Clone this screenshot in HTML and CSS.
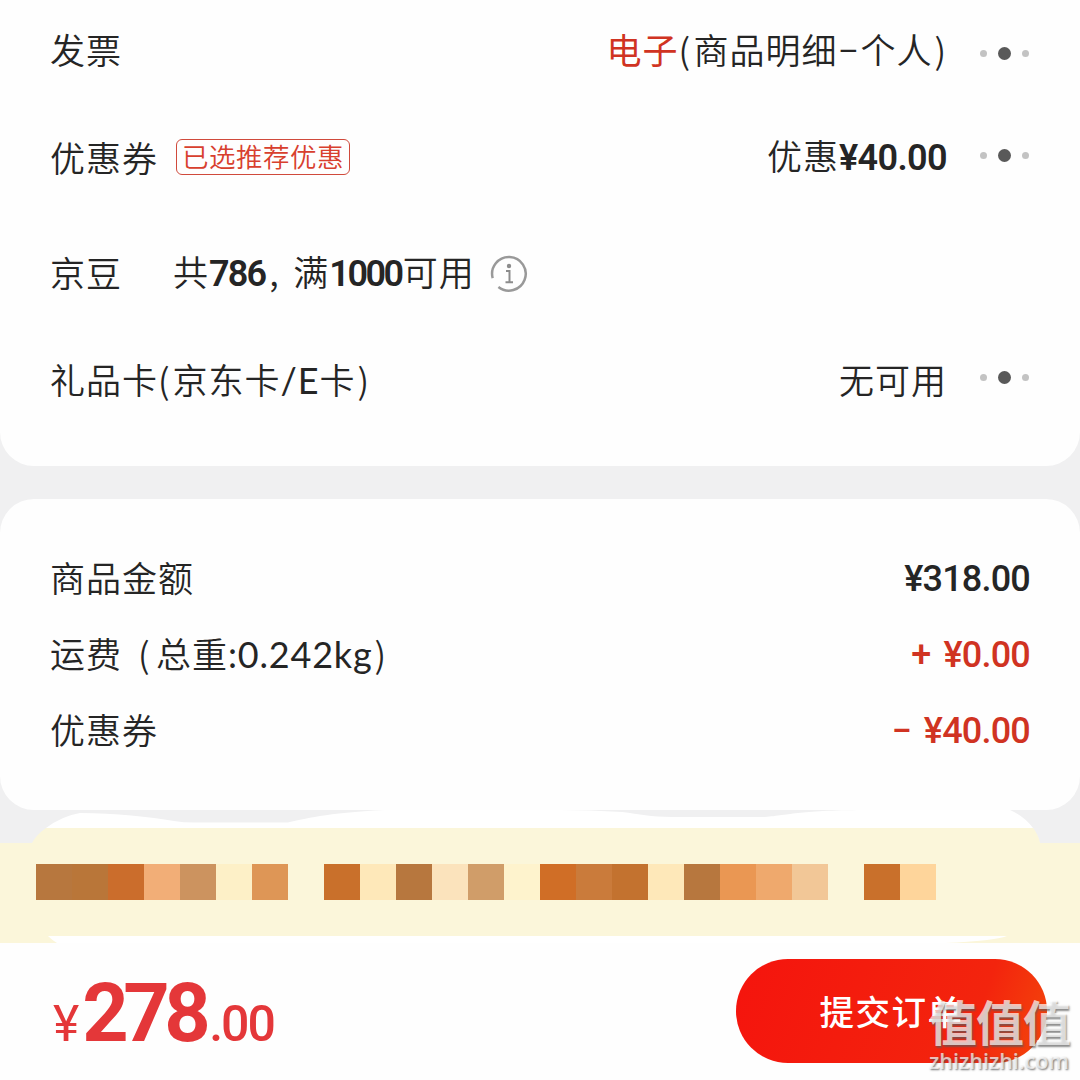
FILE: index.html
```html
<!DOCTYPE html>
<html lang="zh-CN">
<head>
<meta charset="utf-8">
<title>确认订单</title>
<link rel="stylesheet" href="styles.css">
</head>
<body>
<main class="page">
  <section class="card options">
    <div class="row invoice">
      <span class="label">发票</span>
      <span class="value"><span class="red electronic">电子</span><span class="paren open">(</span>商品明细<span class="dash">–</span>个人<span class="paren close">)</span></span>
      <span class="dots"><i></i><i></i><i></i></span>
    </div>
    <div class="row coupon">
      <span class="label">优惠券</span>
      <span class="tag">已选推荐优惠</span>
      <span class="value">优惠<b class="num">¥40.00</b></span>
      <span class="dots"><i></i><i></i><i></i></span>
    </div>
    <div class="row beans">
      <span class="label">京豆</span>
      <span class="detail">共<b class="num">786</b><span class="comma">,</span>满<b class="num limit">1000</b>可用</span>
      <svg class="info" width="38" height="38" viewBox="0 0 38 38">
        <path d="M2.7 23.2A16.8 16.8 0 1 1 8.4 31.9" fill="none" stroke="#999" stroke-width="2.5"/>
        <circle cx="19" cy="11" r="2.2" fill="#8c8c8c"/>
        <path d="M16 16h3.500v11.5M15.500 27.300h7.500" fill="none" stroke="#8c8c8c" stroke-width="2"/>
      </svg>
    </div>
    <div class="row gift">
      <span class="label">礼品卡<span class="paren">(</span>京东卡<span class="latin">/E</span>卡<span class="paren close">)</span></span>
      <span class="value">无可用</span>
      <span class="dots"><i></i><i></i><i></i></span>
    </div>
  </section>

  <section class="card totals">
    <div class="row"><span class="label">商品金额</span><b class="amount">¥318.00</b></div>
    <div class="row"><span class="label">运费<span class="paren wide-open">(</span>总重<span class="latin weight">:0.242kg</span><span class="paren close">)</span></span><b class="amount red"><span class="sign">+</span>¥0.00</b></div>
    <div class="row"><span class="label">优惠券</span><b class="amount red"><span class="sign">−</span>¥40.00</b></div>
  </section>

  <section class="notice">
    <svg class="notice-bg" width="1080" height="133" viewBox="0 0 1080 133">
      <path d="M0 33H1080V133H0Z" fill="#fbf6da"/>
      <path d="M32 33Q36 25 46 18H1033Q1038 24 1040 33Z" fill="#fbf6da"/>
      <path d="M46 18Q62 6 80 3C115 3 150 7 174 11Q186 13 200 12.500H288C304 9 325 3 385 0H559Q590 0 622 2C640 4 650 7 672 7H765C790 5 800 0 870 0H1010Q1024 6 1033 18Z" fill="#fff"/>
      <path d="M48 126H1007Q994 131 945 133H57Q52 130 48 126Z" fill="#fff"/>
    </svg>
    <div class="mosaic">
      <i class="c1"></i><i class="c2"></i><i class="c3"></i><i class="c4"></i><i class="c5"></i><i class="c6"></i><i class="c7"></i><i></i><i class="c8"></i><i class="c9"></i><i class="c10"></i><i class="c11"></i><i class="c12"></i><i class="c13"></i><i class="c14"></i><i class="c15"></i><i class="c16"></i><i class="c9"></i><i class="c10"></i><i class="c17"></i><i class="c18"></i><i class="c19"></i><i></i><i class="c8"></i><i class="c20"></i>
    </div>
  </section>

  <footer class="footer">
    <div class="price"><span class="yen">¥</span><span class="whole">278</span><span class="cents">.00</span></div>
    <button class="submit">提交订单</button>
    <div class="watermark"><span class="mark">值值值</span><span class="site">zhizhizhi.com</span></div>
  </footer>
</main>
</body>
</html>
```
FILE: styles.css
```css
* { box-sizing: border-box; }
body { margin: 0; }
.page {
  width: 1080px;
  height: 1080px;
  overflow: hidden;
  display: flex;
  flex-direction: column;
  background: #f0f0f1;
  color: #252525;
  font-family: "Noto Sans CJK SC", sans-serif;
  font-size: 35px;
  font-weight: 350;
  letter-spacing: 1px;
  white-space: nowrap;
}
.card { background: #fefefe; }
.options { height: 466px; border-radius: 0 0 34px 34px; }
.totals { height: 311px; margin-top: 33px; padding-top: 41px; border-radius: 34px; }
.row { display: flex; align-items: center; padding: 0 50px; line-height: 50px; }
.label, .value, .detail { margin-top: -4px; }
.invoice { height: 106px; }
.invoice .label, .invoice .value { margin-top: -8px; }
.coupon { height: 104px; }
.coupon .label, .coupon .value { margin-top: -3px; }
.coupon .dots { margin-top: -6px; }
.coupon .tag { margin-top: -2px; }
.beans { height: 128px; }
.gift { height: 86px; }
.gift .label, .gift .value { margin-top: -4px; }
.gift .dots { margin-top: -8px; }
.totals .row { height: 76px; }
.totals .label { margin-top: -2px; }
.red { color: #d03322; }
.value { margin-left: auto; }
.electronic { font-weight: 400; }
.paren { display: inline-block; width: 14.5px; }
.open { width: 15px; }
.close { padding-left: 2px; }
.wide-open { width: 18px; margin-left: 16px; }
.dash { display: inline-block; width: 23px; text-align: center; transform: translateY(-4px) scaleY(1.15); }
.num { font-family: Roboto, sans-serif; font-size: 36px; font-weight: 600; letter-spacing: -0.6px; }
.beans .num { letter-spacing: -1.8px; }
.beans .limit { margin-right: 1px; letter-spacing: -2.5px; }
.tag {
  width: 174px;
  height: 36px;
  margin-left: 18px;
  border: 1.5px solid #d04a3c;
  border-radius: 6px;
  color: #d8402e;
  font-size: 26.500px;
  line-height: 32px;
  letter-spacing: 0.5px;
  text-align: center;
}
.detail { margin-left: 51px; }
.comma { display: inline-block; width: 28px; padding-left: 4px; }
.info { margin-left: 15px; }
.latin { font-family: Lato, sans-serif; font-size: 36px; font-weight: 400; }
.weight { letter-spacing: 0.8px; }
.dots { display: flex; align-items: center; gap: 11px; width: 50px; margin-left: 33px; }
.dots i { width: 7px; height: 7px; border-radius: 50%; background: #c3c3c3; }
.dots i:nth-child(2) { width: 13px; height: 13px; background: #595959; }
.amount { margin-left: auto; margin-top: 1px; font-family: Roboto, sans-serif; font-size: 36px; font-weight: 550; letter-spacing: -0.8px; }
.sign { margin-right: 13px; }
.notice { position: relative; height: 133px; padding: 54px 36px 0; }
.notice-bg { position: absolute; left: 0; top: 0; }
.mosaic { position: relative; display: flex; }
.mosaic i { width: 36px; height: 36px; }
.c1 { background: #b7773e; }
.c2 { background: #b97639; }
.c3 { background: #cb6d2c; }
.c4 { background: #f2ae77; }
.c5 { background: #cc935f; }
.c6 { background: #fdf0c7; }
.c7 { background: #de9656; }
.c8 { background: #c9702b; }
.c9 { background: #fee8b9; }
.c10 { background: #b7773e; }
.c11 { background: #fbe3bc; }
.c12 { background: #d09d69; }
.c13 { background: #fef3cd; }
.c14 { background: #d06e26; }
.c15 { background: #ca7b3b; }
.c16 { background: #c3722f; }
.c17 { background: #ea9753; }
.c18 { background: #efa96d; }
.c19 { background: #f2c797; }
.c20 { background: #fed59b; }
.footer { position: relative; flex: 1; display: flex; justify-content: space-between; padding: 16px 33px 0 53px; background: #fefefe; }
.price { display: flex; align-items: baseline; font-family: Roboto, sans-serif; color: #e43739; line-height: 110px; font-weight: 700; }
.yen { font-size: 50px; font-weight: 450; margin-right: 2px; }
.whole { font-size: 81px; letter-spacing: -5.5px; }
.cents { margin-left: 4px; font-size: 50px; font-weight: 500; letter-spacing: -2px; }
.submit {
  width: 311px;
  height: 104px;
  padding: 0 0 3px;
  border: 0;
  border-radius: 52px;
  background: linear-gradient(110deg, #f5140d 0%, #f3240d 75%, #f3480b 100%);
  color: #fff;
  font: 500 34.5px "Noto Sans CJK SC", sans-serif;
  letter-spacing: 1.5px;
}
.watermark { position: absolute; left: 929px; top: 48px; display: flex; flex-direction: column; color: rgba(255, 255, 255, 0.7); }
.mark { font-size: 48px; font-weight: 700; line-height: 58px; letter-spacing: -1px; text-shadow: 1px 2px 2px rgba(90, 90, 90, 0.7); }
.site { font-family: "Open Sans", sans-serif; font-size: 21.5px; font-weight: 600; line-height: 24px; letter-spacing: 0; text-shadow: 1px 1px 2px rgba(80, 80, 80, 0.8); }
```
